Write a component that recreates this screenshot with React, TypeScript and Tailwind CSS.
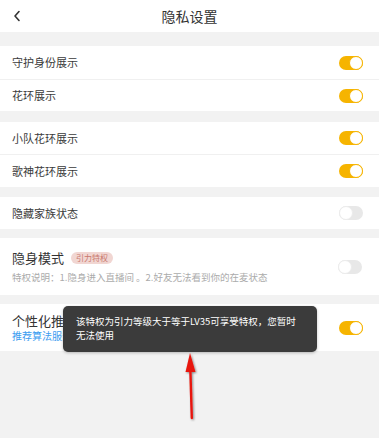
import React from 'react';

const font = { fontFamily: '"Noto Sans CJK SC", "Noto Sans", sans-serif' };

function Toggle({ on }: { on: boolean }) {
  return on ? (
    <div className="w-[24px] h-[14px] rounded-full bg-[#f6b400] flex items-center justify-end">
      <div className="w-[14px] h-[14px] rounded-full bg-white border border-[#f6b400]" />
    </div>
  ) : (
    <div className="w-[24px] h-[14px] rounded-full bg-[#e8e8e8] flex items-center justify-start">
      <div className="w-[14px] h-[14px] rounded-full bg-white border border-[#ececec]" />
    </div>
  );
}

function Row({ label, on, h, border }: { label: string; on: boolean; h: string; border?: boolean }) {
  return (
    <div className={`flex items-center justify-between pl-[12px] pr-[16px] bg-white ${h} ${border ? 'border-b border-[#f0f0f0]' : ''}`}>
      <span className="text-[11px] text-[#3a3a3a]">{label}</span>
      <Toggle on={on} />
    </div>
  );
}

export default function App() {
  return (
    <div className="relative w-[379px] h-[438px] bg-[#f2f2f2] overflow-hidden" style={font}>
      <div className="relative h-[32px] bg-white flex items-center justify-center">
        <svg className="absolute left-[13px] top-[10px]" width="8" height="12" viewBox="0 0 8 12" fill="none" stroke="#333" strokeWidth="1.6" strokeLinecap="round" strokeLinejoin="round">
          <polyline points="6,1.5 2,6 6,10.5" />
        </svg>
        <span className="text-[14px] text-[#333]">隐私设置</span>
      </div>

      <div className="mt-[14px]">
        <Row label="守护身份展示" on h="h-[34px]" border />
        <Row label="花环展示" on h="h-[31px]" />
      </div>

      <div className="mt-[11px]">
        <Row label="小队花环展示" on h="h-[33px]" border />
        <Row label="歌神花环展示" on h="h-[32px]" />
      </div>

      <div className="mt-[10px]">
        <Row label="隐藏家族状态" on={false} h="h-[32px]" />
      </div>

      <div className="mt-[9px] h-[57px] bg-white flex items-center justify-between pl-[12px] pr-[17px]">
        <div className="flex flex-col">
          <div className="flex items-center gap-[7px]">
            <span className="text-[13px] text-[#333] leading-[18px]">隐身模式</span>
            <span className="h-[12px] px-[5px] rounded-full bg-[#f1d6d2] text-[#c9786e] text-[8px] leading-[12px]">引力特权</span>
          </div>
          <span className="mt-[4px] text-[9.5px] text-[#ababab] leading-[13px]">特权说明：1.隐身进入直播间 。2.好友无法看到你的在麦状态</span>
        </div>
        <Toggle on={false} />
      </div>

      <div className="mt-[9px] h-[47px] bg-white flex items-center justify-between pl-[12px] pr-[16px]">
        <div className="flex flex-col">
          <span className="text-[13px] text-[#333] leading-[17px]">个性化推荐</span>
          <span className="text-[10px] text-[#3c9cf0] leading-[14px]">推荐算法服务说明</span>
        </div>
        <Toggle on />
      </div>

      <div className="absolute left-[63px] top-[306px] w-[254px] h-[46px] rounded-[5px] bg-[#3b3b3b] pl-[13px] pr-[10px] pt-[8px] shadow-[0_1px_3px_rgba(0,0,0,0.25)]">
        <p className="text-[9.5px] leading-[14px] text-white">
          该特权为引力等级大于等于LV35可享受特权，您暂时
          <br />
          无法使用
        </p>
      </div>

      <svg className="absolute left-[175px] top-[350px]" width="32" height="75" viewBox="0 0 32 75">
        <defs>
          <filter id="sh" x="-50%" y="-20%" width="200%" height="140%">
            <feDropShadow dx="1" dy="1" stdDeviation="1.2" floodColor="#000" floodOpacity="0.45" />
          </filter>
        </defs>
        <g filter="url(#sh)">
          <line x1="16.8" y1="68" x2="15.3" y2="18" stroke="#e8140e" strokeWidth="2.4" strokeLinecap="round" />
          <polygon points="15,3 20.5,22 10.5,22" fill="#e8140e" />
        </g>
      </svg>
    </div>
  );
}
